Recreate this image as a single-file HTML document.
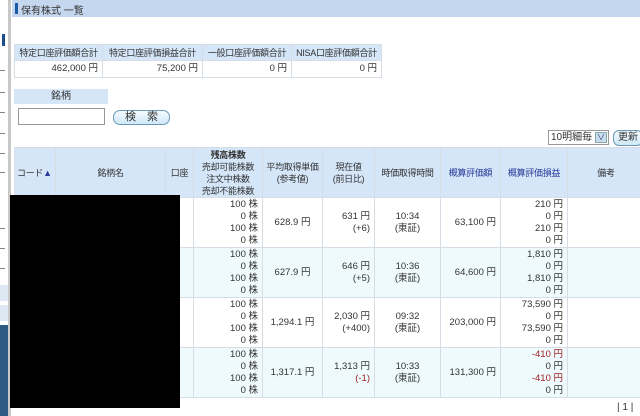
<!DOCTYPE html>
<html><head><meta charset="utf-8"><style>
*{margin:0;padding:0;box-sizing:border-box}
body{width:640px;height:416px;overflow:hidden;background:#fff;font-family:"Liberation Sans","Noto Sans CJK JP",sans-serif;font-size:10px;color:#333;position:relative}
.a{position:absolute}
table{border-collapse:collapse;position:absolute;table-layout:fixed}
td{border:1px solid #d6dde4;font-size:9.5px;line-height:12px;white-space:nowrap;overflow:hidden}
.h td{background:#d4e6f8;text-align:center;font-size:9px;letter-spacing:-0.3px}
.r{text-align:right;padding-right:4px}
.c{text-align:center}
.blue{color:#2a3a9a}
.red{color:#a02020}
</style></head><body>
<div class="a" style="left:0;top:0;width:9px;height:416px;background:#fff"></div>
<div class="a" style="left:2px;top:34px;width:3px;height:12px;background:#1a4c8a"></div>
<div class="a" style="left:0;top:70px;width:5px;height:1px;background:#888"></div>
<div class="a" style="left:0;top:92px;width:5px;height:1px;background:#888"></div>
<div class="a" style="left:0;top:112px;width:5px;height:1px;background:#888"></div>
<div class="a" style="left:0;top:133px;width:5px;height:1px;background:#888"></div>
<div class="a" style="left:0;top:153px;width:5px;height:1px;background:#888"></div>
<div class="a" style="left:0;top:172px;width:5px;height:1px;background:#888"></div>
<div class="a" style="left:0;top:228px;width:5px;height:1px;background:#888"></div>
<div class="a" style="left:0;top:248px;width:5px;height:1px;background:#888"></div>
<div class="a" style="left:0;top:268px;width:5px;height:1px;background:#888"></div>
<div class="a" style="left:0;top:285px;width:8px;height:16px;background:#dde8f2"></div>
<div class="a" style="left:0;top:305px;width:8px;height:16px;background:#dde8f2"></div>
<div class="a" style="left:0;top:325px;width:8px;height:91px;background:#2c5a80"></div>
<div class="a" style="left:8px;top:0;width:3px;height:416px;background:#c8c8c8"></div>
<div class="a" style="left:12px;top:0;width:628px;height:17px;background:#c5d7ee"></div>
<div class="a" style="left:15px;top:3px;width:3px;height:11px;background:#1a5aa8"></div>
<div class="a" style="left:21px;top:2px;font-size:10px;color:#333">保有株式 一覧</div>

<table style="left:14px;top:44px;width:367px">
<colgroup><col style="width:88px"><col style="width:100px"><col style="width:89px"><col style="width:90px"></colgroup>
<tr class="h" style="height:16px"><td>特定口座評価額合計</td><td>特定口座評価損益合計</td><td>一般口座評価額合計</td><td>NISA口座評価額合計</td></tr>
<tr style="height:17px"><td class="r">462,000 円</td><td class="r">75,200 円</td><td class="r">0 円</td><td class="r">0 円</td></tr>
</table>

<div class="a c" style="left:14px;top:89px;width:94px;height:15px;background:#d4e6f8;line-height:15px">銘柄</div>
<div class="a" style="left:18px;top:108px;width:87px;height:17px;border:1px solid #999;background:#fff"></div>
<div class="a c" style="left:113px;top:110px;width:57px;height:15px;border:1px solid #6a9ab8;border-radius:7px;background:linear-gradient(#f4fbff,#cfe8f6);line-height:13px;font-size:11px">検　索</div>

<div class="a" style="left:548px;top:130px;width:61px;height:15px;border:1px solid #999;background:#fff;font-size:10px;line-height:13px;padding-left:2px">10明細毎</div>
<div class="a" style="left:595px;top:132px;width:12px;height:11px;background:#c8dcf0;border:1px solid #8aa;color:#335;font-size:8px;text-align:center;line-height:10px">∨</div>
<div class="a c" style="left:613px;top:130px;width:30px;height:16px;border:1px solid #6a9ab8;border-radius:6px;background:linear-gradient(#f4fbff,#cfe8f6);line-height:14px">更新</div>

<table style="left:14px;top:147px;width:630px">
<colgroup><col style="width:41px"><col style="width:110px"><col style="width:28px"><col style="width:69px"><col style="width:60px"><col style="width:52px"><col style="width:66px"><col style="width:60px"><col style="width:67px"><col style="width:77px"></colgroup>
<tr class="h" style="height:50px"><td style="text-align:left;padding-left:2px">コード<span class="blue">▲</span></td><td>銘柄名</td><td>口座</td><td><b>残高株数</b><br>売却可能株数<br>注文中株数<br>売却不能株数</td><td>平均取得単価<br>(参考値)</td><td>現在値<br>(前日比)</td><td>時価取得時間</td><td class="blue">概算評価額</td><td class="blue">概算評価損益</td><td>備考</td></tr>
<tr style="height:50px"><td></td><td></td><td>定</td><td class="r">100 株<br>0 株<br>100 株<br>0 株</td><td class="c">628.9 円</td><td class="r">631 円<br>(+6)</td><td class="c">10:34<br>(東証)</td><td class="r">63,100 円</td><td class="r">210 円<br>0 円<br>210 円<br>0 円</td><td></td></tr>
<tr style="height:50px;background:#eefafc"><td></td><td></td><td>定</td><td class="r">100 株<br>0 株<br>100 株<br>0 株</td><td class="c">627.9 円</td><td class="r">646 円<br>(+5)</td><td class="c">10:36<br>(東証)</td><td class="r">64,600 円</td><td class="r">1,810 円<br>0 円<br>1,810 円<br>0 円</td><td></td></tr>
<tr style="height:50px"><td></td><td></td><td>定</td><td class="r">100 株<br>0 株<br>100 株<br>0 株</td><td class="c">1,294.1 円</td><td class="r">2,030 円<br>(+400)</td><td class="c">09:32<br>(東証)</td><td class="r">203,000 円</td><td class="r">73,590 円<br>0 円<br>73,590 円<br>0 円</td><td></td></tr>
<tr style="height:50px;background:#eefafc"><td></td><td></td><td>定</td><td class="r">100 株<br>0 株<br>100 株<br>0 株</td><td class="c">1,317.1 円</td><td class="r">1,313 円<br><span class="red">(-1)</span></td><td class="c">10:33<br>(東証)</td><td class="r">131,300 円</td><td class="r"><span class="red">-410 円</span><br>0 円<br><span class="red">-410 円</span><br>0 円</td><td></td></tr>
</table>
<div class="a" style="left:10px;top:195px;width:170px;height:213px;background:#000"></div>
<div class="a" style="left:617px;top:402px;font-size:10px">| 1 |</div>
</body></html>
